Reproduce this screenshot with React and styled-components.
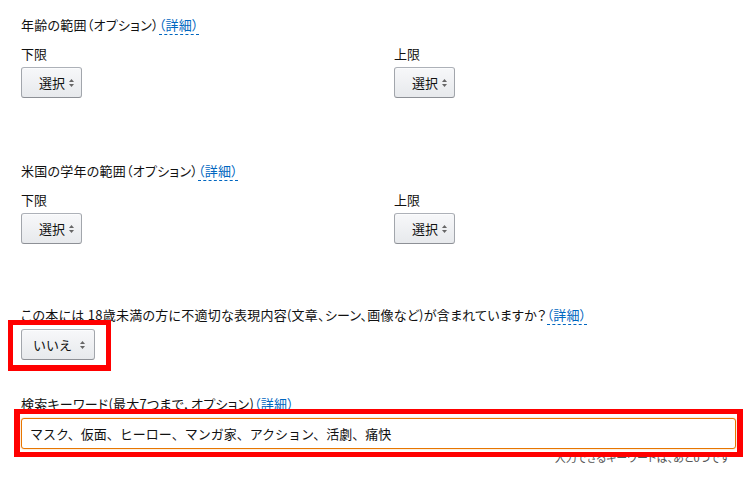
import React from 'react';
import styled, { createGlobalStyle } from 'styled-components';

const GlobalStyle = createGlobalStyle`
    body {
        margin: 0;
        background: #fff;
        color: #111;
        font-family: "Noto Sans CJK JP", "Noto Sans", sans-serif;
    }
`;

const Page = styled.div`
    width: 751px;
    height: 499px;
    overflow: hidden;
    padding: 16px 0 0 21px;
    box-sizing: border-box;
    display: flex;
    flex-direction: column;
`;

const Section = styled.div`
    display: flex;
    flex-direction: column;
    margin-bottom: ${props => props.gap}px;
`;

const Title = styled.div`
    font-size: 13px;
    line-height: 18px;
    font-feature-settings: "palt";
    letter-spacing: 0.25px;
    color: #111;
    white-space: nowrap;
`;

const Detail = styled.a`
    color: #0066c0;
    text-decoration: none;
    border-bottom: 1px dashed #0066c0;
    cursor: pointer;
`;

const Columns = styled.div`
    display: grid;
    grid-template-columns: 373px 1fr;
    margin-top: 11px;
`;

const Field = styled.div`
    display: flex;
    flex-direction: column;
    align-items: flex-start;
    gap: 4px;
`;

const Label = styled.div`
    font-size: 13px;
    line-height: 18px;
    color: #111;
`;

const Highlight = styled.div`
    position: relative;
    align-self: flex-start;
    margin-top: 5px;
    &::after {
        content: "";
        position: absolute;
        top: ${props => props.t}px;
        left: ${props => props.l}px;
        right: ${props => props.r}px;
        bottom: ${props => props.b}px;
        border-style: solid;
        border-color: #ff0000;
        border-width: ${props => props.bw};
        pointer-events: none;
    }
`;

const SelectButton = styled.button`
    display: flex;
    align-items: center;
    gap: ${props => props.gap || 4}px;
    height: 31px;
    margin: 0;
    padding: ${props => props.pad};
    box-sizing: border-box;
    font-family: inherit;
    font-size: 13px;
    color: #111;
    background: linear-gradient(to bottom, #f7f8fa, #e7e9ec);
    border: 1px solid;
    border-color: #adb1b8 #a2a6ac #8d9096;
    border-radius: 3px;
    box-shadow: 0 1px 0 rgba(255, 255, 255, 0.6) inset;
    cursor: pointer;
`;

const KeywordInput = styled.div`
    width: 715px;
    height: 31px;
    box-sizing: border-box;
    padding: 0 8px;
    display: flex;
    align-items: center;
    font-size: 13px;
    color: #111;
    background: #fff;
    border: 1px solid #e77600;
    border-radius: 3px;
    box-shadow: 0 0 2px rgba(228, 121, 17, 0.5);
    white-space: nowrap;
`;

const Hint = styled.div`
    width: 709px;
    margin-top: 2px;
    text-align: right;
    font-size: 11px;
    line-height: 12px;
    font-feature-settings: "palt";
    color: #555;
`;

const Arrows = () => (
    <svg width="5" height="8" viewBox="0 0 5 8">
        <path d="M2.5 0 L5 3 H0 Z" fill="#666" />
        <path d="M2.5 8 L5 5 H0 Z" fill="#666" />
    </svg>
);

const Dropdown = ({ text, pad, gap }) => (
    <SelectButton pad={pad} gap={gap}>
        {text}
        <Arrows />
    </SelectButton>
);

const RangeSection = ({ title, gap }) => (
    <Section gap={gap}>
        <Title>{title}<Detail>（詳細）</Detail></Title>
        <Columns>
            <Field>
                <Label>下限</Label>
                <Dropdown text="選択" pad="0 7px 0 17px" />
            </Field>
            <Field>
                <Label>上限</Label>
                <Dropdown text="選択" pad="0 7px 0 17px" />
            </Field>
        </Columns>
    </Section>
);

const App = () => (
    <>
        <GlobalStyle />
        <Page>
            <RangeSection title="年齢の範囲（オプション）" gap={64} />
            <RangeSection title="米国の学年の範囲（オプション）" gap={62} />
            <Section gap={35}>
                <Title>
                    この本には 18歳未満の方に不適切な表現内容(文章、シーン、画像など)が含まれていますか？<Detail>（詳細）</Detail>
                </Title>
                <Highlight t={-9} l={-13} r={-16} b={-11} bw="5px 5px 6px 5px">
                    <Dropdown text="いいえ" pad="0 9px 0 11px" gap={8} />
                </Highlight>
            </Section>
            <Section gap={0}>
                <Title>検索キーワード(最大7つまで, オプション)<Detail>（詳細）</Detail></Title>
                <Highlight t={-9} l={-7} r={-7} b={-8} bw="5px 6px 5px 6px">
                    <KeywordInput>マスク、仮面、ヒーロー、マンガ家、アクション、活劇、痛快</KeywordInput>
                </Highlight>
                <Hint>入力できるキーワードは、あと0つです</Hint>
            </Section>
        </Page>
    </>
);

export default App;
